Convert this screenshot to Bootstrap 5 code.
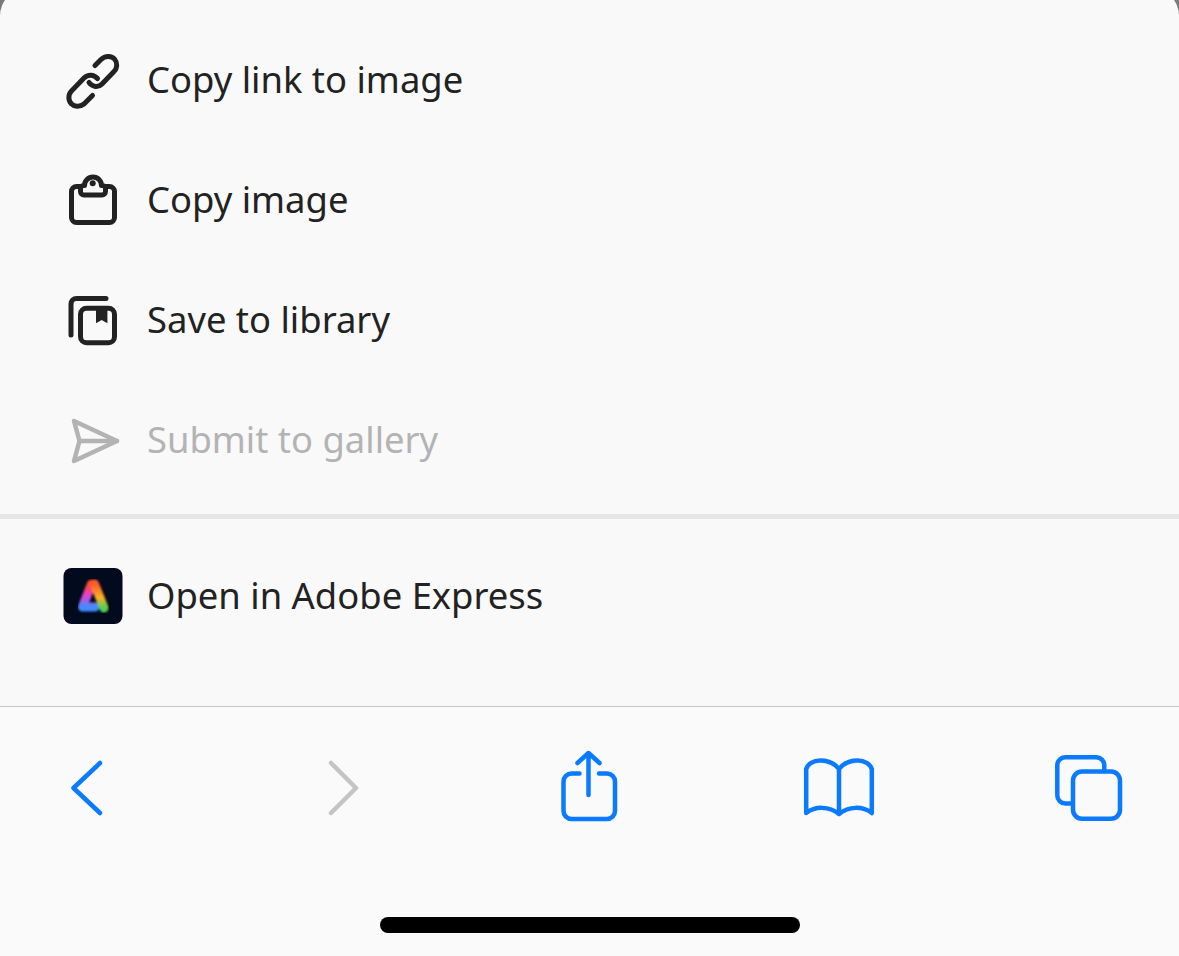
<!DOCTYPE html>
<html lang="en">
<head>
    <meta charset="UTF-8">
    <meta name="viewport" content="width=device-width, initial-scale=1.0">
    <title>Share menu</title>
    <link href="https://cdn.jsdelivr.net/npm/bootstrap@5.3.3/dist/css/bootstrap.min.css" rel="stylesheet">
    <style>
        html, body {
            height: 100%;
            margin: 0;
        }
        body {
            background: #7a7a7a;
            overflow: hidden;
        }
        .sheet {
            height: 968px;
            margin-top: -12px;
            background: #f9f9f9;
            border-radius: 28px 28px 0 0;
            font-family: "Noto Sans", "Open Sans", sans-serif;
        }
        .menu-rows {
            padding-top: 32px;
        }
        .menu-row {
            height: 120px;
            padding: 0 0 0 63px;
            background: transparent;
            border: 0;
            font-size: 36.4px;
            color: #222222;
            gap: 24px;
        }
        .menu-row span {
            margin-top: -2px;
        }
        .menu-row.muted-row {
            color: #b3b3b3;
        }
        .menu-row .ico {
            width: 60px;
            height: 60px;
            flex: none;
        }
        .thick-rule {
            height: 5px;
            margin-top: 14px;
            background: #e6e6e6;
        }
        .express-row {
            height: 187px;
        }
        .express-row .menu-row {
            height: 154px;
        }
        .tool-bar {
            height: 250px;
            background: #fafafb;
            border-top: 1px solid #c6c6c8;
            position: relative;
        }
        .tool-icons {
            height: 164px;
        }
        .tool-btn {
            width: 90px;
            height: 90px;
        }
        .tool-btn.back-btn {
            margin-left: 42px;
        }
        .tool-btn.tabs-btn {
            margin-right: 45px;
        }
        .home-bar {
            position: absolute;
            left: 380px;
            top: 210px;
            width: 420px;
            height: 16px;
            border-radius: 8px;
            background: #000;
        }
    </style>
</head>
<body>
    <div class="sheet d-flex flex-column">
        <div class="list-group list-group-flush menu-rows">
            <div class="list-group-item d-flex align-items-center menu-row">
                <svg class="ico" viewBox="0 0 60 60" fill="none" stroke="#222" stroke-width="5" stroke-linecap="round" stroke-linejoin="round">
                    <path d="M32 15.500L38 9.500C42.500 5 49 6 51.500 9C54.500 12.500 54.500 18 51 21.500L39 34C35 38 29.500 37 26 32.500"/>
                    <path d="M29.500 45.500L21 54C16.500 57.500 11 56.500 8.500 54C5 50.500 5 44.500 8.500 41L21 28C25 24 31 24.500 34.500 28.500"/>
                </svg>
                <span>Copy link to image</span>
            </div>
            <div class="list-group-item d-flex align-items-center menu-row">
                <svg class="ico" viewBox="0 0 60 60" fill="none" stroke="#222" stroke-width="5" stroke-linecap="round" stroke-linejoin="round">
                    <path d="M17 16.500h-3.500a5 5 0 0 0-5 5v26a5 5 0 0 0 5 5h33a5 5 0 0 0 5-5v-26a5 5 0 0 0-5-5H43"/>
                    <path d="M21.500 15.500a8.500 8.500 0 0 1 17 0h1a3 3 0 0 1 3 3v3a3.500 3.500 0 0 1-3.500 3.500h-18a3.500 3.500 0 0 1-3.500-3.500v-3a3 3 0 0 1 3-3z"/>
                    <circle cx="29.700" cy="13.300" r="3" fill="#222" stroke="none"/>
                </svg>
                <span>Copy image</span>
            </div>
            <div class="list-group-item d-flex align-items-center menu-row">
                <svg class="ico" viewBox="0 0 60 60" fill="none" stroke="#222" stroke-width="5" stroke-linecap="round" stroke-linejoin="round">
                    <path d="M8 45V14a5.500 5.500 0 0 1 5.500-5.500H43"/>
                    <rect x="17.500" y="18.300" width="34" height="34.400" rx="6"/>
                    <path d="M33 17v16.300l5.700-3.300 5.700 3.300V17z" fill="#222" stroke="none"/>
                </svg>
                <span>Save to library</span>
            </div>
            <div class="list-group-item d-flex align-items-center menu-row muted-row">
                <svg class="ico" viewBox="0 0 60 60" fill="none" stroke="#b3b3b3" stroke-width="4.5" stroke-linecap="round" stroke-linejoin="round">
                    <path d="M11 11L54 31L11 51L16.500 31z"/>
                    <path d="M16.500 31H54"/>
                </svg>
                <span>Submit to gallery</span>
            </div>
        </div>
        <div class="thick-rule"></div>
        <div class="express-row">
            <div class="d-flex align-items-center menu-row">
                <svg class="ico" viewBox="0 0 60 60" fill="none">
                    <defs>
                        <linearGradient id="legLeft" x1="0" y1="0" x2="0" y2="1">
                            <stop offset="0" stop-color="#ff4a2a"/>
                            <stop offset=".5" stop-color="#e83fd0"/>
                            <stop offset="1" stop-color="#3f8cff"/>
                        </linearGradient>
                        <linearGradient id="legRight" x1="0" y1="0" x2="0" y2="1">
                            <stop offset="0" stop-color="#ff5a2a"/>
                            <stop offset=".55" stop-color="#ffb020"/>
                            <stop offset="1" stop-color="#4fd24f"/>
                        </linearGradient>
                        <filter id="softEdge" x="-20%" y="-20%" width="140%" height="140%">
                            <feGaussianBlur stdDeviation="1"/>
                        </filter>
                    </defs>
                    <rect x="0.500" y="2" width="59" height="56" rx="8" fill="#020a1e"/>
                    <g filter="url(#softEdge)" stroke-width="9" stroke-linejoin="round" stroke-linecap="round">
                        <path d="M28.500 18L19.500 41H32" stroke="url(#legLeft)"/>
                        <path d="M31.500 18L41 42" stroke="url(#legRight)"/>
                    </g>
                </svg>
                <span>Open in Adobe Express</span>
            </div>
        </div>
        <div class="tool-bar">
            <div class="d-flex justify-content-between align-items-center tool-icons">
                <svg class="tool-btn back-btn" viewBox="0 0 90 90" fill="none" stroke="#0a7aff" stroke-width="4.5" stroke-linecap="round" stroke-linejoin="round"><path d="M58 19L31.500 44L58 69"/></svg>
                <svg class="tool-btn" viewBox="0 0 90 90" fill="none" stroke="#c4c4c4" stroke-width="4.5" stroke-linecap="round" stroke-linejoin="round"><path d="M38 19L63 44L38 69"/></svg>
                <svg class="tool-btn" viewBox="0 0 90 90" fill="none" stroke="#0a7aff" stroke-width="4.5" stroke-linecap="round" stroke-linejoin="round"><path d="M36.500 29.500h-8a8 8 0 0 0-8 8v29.500a8 8 0 0 0 8 8h35.500a8 8 0 0 0 8-8V37.500a8 8 0 0 0-8-8h-8"/><path d="M45.500 51V9M34.500 19L45.500 9L56.500 19"/></svg>
                <svg class="tool-btn" viewBox="0 0 90 90" fill="none" stroke="#0a7aff" stroke-width="4.5" stroke-linecap="round" stroke-linejoin="round"><path d="M45 25C41.200 20 34.200 16.500 26.200 16.500C19.200 16.500 13.700 20 12.200 25V69C21.200 62 35.200 62 45 70C54.800 62 68.800 62 77.800 69V25C76.200 20 70.700 16.500 63.700 16.500C55.700 16.500 48.800 20 45 25zM45 25V70"/></svg>
                <svg class="tool-btn tabs-btn" viewBox="0 0 90 90" fill="none" stroke="#0a7aff" stroke-width="4.5" stroke-linecap="round" stroke-linejoin="round"><path d="M27 59.500h-5.700a8 8 0 0 1-8-8V21.300a8 8 0 0 1 8-8h31a8 8 0 0 1 8 8v6"/><rect x="29" y="27.500" width="47" height="47.300" rx="9"/></svg>
            </div>
            <div class="home-bar"></div>
        </div>
    </div>
    <script src="https://cdn.jsdelivr.net/npm/bootstrap@5.3.3/dist/js/bootstrap.bundle.min.js"></script>
</body>
</html>
